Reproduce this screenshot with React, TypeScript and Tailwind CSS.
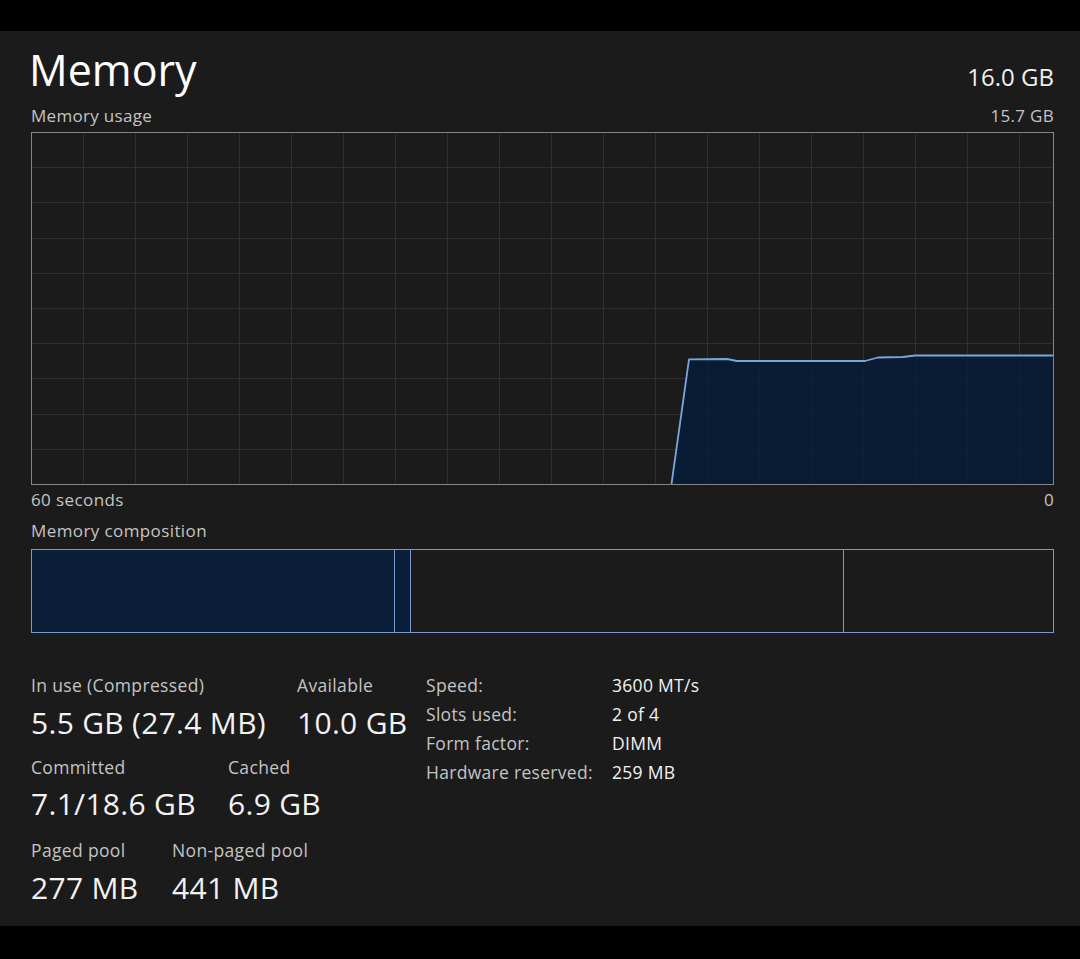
import React from "react";

const FONT = { fontFamily: '"Segoe UI", "Open Sans", "Noto Sans", sans-serif' };

function UsageGraph() {
  const W = 1023;
  const H = 353;
  const vLines = Array.from({ length: 19 }, (_, i) => 52 * (i + 1));
  const hLines = Array.from({ length: 9 }, (_, i) => 35.2 * (i + 1));
  const pts: [number, number][] = [
    [640.5, 352],
    [658, 227.3],
    [696, 227],
    [706, 229],
    [834, 229],
    [847, 225.5],
    [872, 225],
    [884, 223.5],
    [1022, 223.5],
  ];
  const line = pts.map((p, i) => `${i ? "L" : "M"}${p[0]} ${p[1]}`).join(" ");
  const area = `${line} L1022 352 Z`;
  return (
    <svg width={W} height={H} className="block">
      {vLines.map((x) => (
        <line key={"v" + x} x1={x + 0.5} y1={0} x2={x + 0.5} y2={H} stroke="#2f2f2f" strokeWidth={1} />
      ))}
      {hLines.map((y) => (
        <line key={"h" + y} x1={0} y1={Math.round(y) + 0.5} x2={W} y2={Math.round(y) + 0.5} stroke="#2f2f2f" strokeWidth={1} />
      ))}
      <path d={area} fill="rgb(7,29,58)" fillOpacity={0.82} />
      <path d={line} fill="none" stroke="#7aa6dc" strokeWidth={1.8} strokeLinejoin="round" />
      <rect x={0.5} y={0.5} width={W - 1} height={H - 1} fill="none" stroke="#858585" strokeWidth={1} />
    </svg>
  );
}

function Stat({ label, value, w }: { label: string; value: string; w: string }) {
  return (
    <div className={`${w} shrink-0`}>
      <div className="text-[17.5px] tracking-[0.35px] leading-none text-[#c4c4c4]">{label}</div>
      <div className="mt-[13px] text-[30px] tracking-[0.3px] leading-none text-[#f2f2f2]">{value}</div>
    </div>
  );
}

export default function App() {
  const specs: [string, string][] = [
    ["Speed:", "3600 MT/s"],
    ["Slots used:", "2 of 4"],
    ["Form factor:", "DIMM"],
    ["Hardware reserved:", "259 MB"],
  ];
  return (
    <div className="w-[1080px] h-[959px] bg-black pt-[31px]" style={FONT}>
      <div className="h-[895px] bg-[#1b1b1b] pl-[31px] pr-[26px] pt-[17px] flex flex-col">
        <div className="flex items-baseline justify-between">
          <div className="text-[43px] leading-none text-white -ml-[2px]">Memory</div>
          <div className="text-[24px] leading-none text-[#f0f0f0]">16.0 GB</div>
        </div>
        <div className="mt-[16px] flex items-baseline justify-between text-[17px] tracking-[0.3px] leading-none text-[#c4c4c4]">
          <div>Memory usage</div>
          <div>15.7 GB</div>
        </div>
        <div className="mt-[8px]">
          <UsageGraph />
        </div>
        <div className="mt-[6px] flex items-baseline justify-between text-[17px] tracking-[0.4px] leading-none text-[#c4c4c4]">
          <div>60 seconds</div>
          <div>0</div>
        </div>
        <div className="mt-[14px] text-[17px] tracking-[0.4px] leading-none text-[#c4c4c4]">Memory composition</div>
        <div className="mt-[10px] h-[84px] flex border border-[#7599cf]">
          <div className="w-[363px] border-r border-[#7599cf] bg-[#0b1e38]" />
          <div className="w-[16px] border-r border-[#7599cf] bg-[#0b1e38]" />
          <div className="w-[433px] border-r border-[#7599cf]" />
          <div className="flex-1" />
        </div>
        <div className="mt-[44px] flex">
          <div className="w-[395px] shrink-0 flex flex-col">
            <div className="flex">
              <Stat w="w-[266px]" label="In use (Compressed)" value="5.5 GB (27.4 MB)" />
              <Stat w="w-[120px]" label="Available" value="10.0 GB" />
            </div>
            <div className="mt-[21px] flex">
              <Stat w="w-[197px]" label="Committed" value="7.1/18.6 GB" />
              <Stat w="w-[120px]" label="Cached" value="6.9 GB" />
            </div>
            <div className="mt-[23px] flex">
              <Stat w="w-[141px]" label="Paged pool" value="277 MB" />
              <Stat w="w-[160px]" label="Non-paged pool" value="441 MB" />
            </div>
          </div>
          <div className="flex flex-col gap-[11.5px] text-[17.5px] tracking-[0.3px] leading-none">
            {specs.map(([k, v]) => (
              <div key={k} className="flex">
                <div className="w-[186px] text-[#c4c4c4]">{k}</div>
                <div className="text-[#f2f2f2]">{v}</div>
              </div>
            ))}
          </div>
        </div>
      </div>
    </div>
  );
}
